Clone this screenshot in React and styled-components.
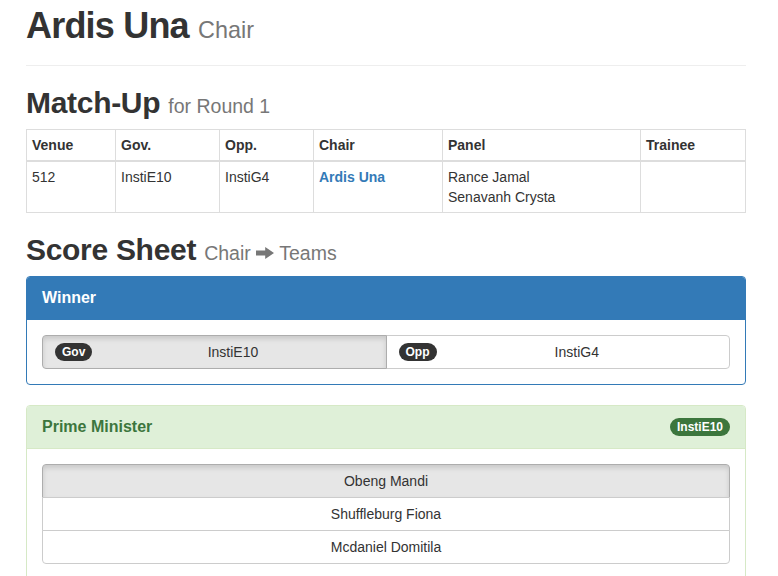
import { styled, createGlobalStyle } from 'styled-components';

const GlobalStyle = createGlobalStyle`
  body {
    margin: 0;
    font-family: "Liberation Sans", Arial, sans-serif;
    font-size: 14px;
    line-height: 20px;
    color: #333;
    background: #fff;
  }
`;

const matchup = {
  venue: '512',
  gov: 'InstiE10',
  opp: 'InstiG4',
  chair: 'Ardis Una',
  panel: ['Rance Jamal', 'Senavanh Crysta'],
  trainee: '',
};

const speakers = ['Obeng Mandi', 'Shuffleburg Fiona', 'Mcdaniel Domitila'];

function ArrowRight() {
  return (
    <ARROW_ST viewBox="0 0 18 12" aria-hidden="true">
      <path d="M0 3.6h9.2V0L18 6l-8.8 6V8.4H0z" fill="currentColor" />
    </ARROW_ST>
  );
}

function App() {
  return (
    <PAGE_ST>
      <GlobalStyle />
      <PAGEHEADER_ST>
        <H1_ST>
          Ardis Una <SMALL_ST>Chair</SMALL_ST>
        </H1_ST>
      </PAGEHEADER_ST>

      <H2_ST>
        Match-Up <SMALL_ST>for Round 1</SMALL_ST>
      </H2_ST>
      <TABLE_ST>
        <colgroup>
          <col style={{ width: 89 }} />
          <col style={{ width: 104 }} />
          <col style={{ width: 94 }} />
          <col style={{ width: 129 }} />
          <col style={{ width: 198 }} />
          <col />
        </colgroup>
        <thead>
          <tr>
            <TH_ST>Venue</TH_ST>
            <TH_ST>Gov.</TH_ST>
            <TH_ST>Opp.</TH_ST>
            <TH_ST>Chair</TH_ST>
            <TH_ST>Panel</TH_ST>
            <TH_ST>Trainee</TH_ST>
          </tr>
        </thead>
        <tbody>
          <tr>
            <TD_ST>{matchup.venue}</TD_ST>
            <TD_ST>{matchup.gov}</TD_ST>
            <TD_ST>{matchup.opp}</TD_ST>
            <TD_ST>
              <LINK_ST href="#">{matchup.chair}</LINK_ST>
            </TD_ST>
            <TD_ST>
              {matchup.panel.map((name) => (
                <div key={name}>{name}</div>
              ))}
            </TD_ST>
            <TD_ST>{matchup.trainee}</TD_ST>
          </tr>
        </tbody>
      </TABLE_ST>

      <H2_ST>
        Score Sheet{' '}
        <SMALL_ST>
          Chair <ArrowRight /> Teams
        </SMALL_ST>
      </H2_ST>

      <PANEL_ST $variant="primary">
        <HEADING_ST $variant="primary">
          <TITLE_ST>Winner</TITLE_ST>
        </HEADING_ST>
        <BODY_ST>
          <BTNGROUP_ST>
            <SIDEBTN_ST $active>
              <BADGE_ST>Gov</BADGE_ST>
              <BTNLABEL_ST>{matchup.gov}</BTNLABEL_ST>
            </SIDEBTN_ST>
            <SIDEBTN_ST>
              <BADGE_ST>Opp</BADGE_ST>
              <BTNLABEL_ST>{matchup.opp}</BTNLABEL_ST>
            </SIDEBTN_ST>
          </BTNGROUP_ST>
        </BODY_ST>
      </PANEL_ST>

      <PANEL_ST $variant="success">
        <HEADING_ST $variant="success">
          <TITLE_ST>Prime Minister</TITLE_ST>
          <BADGE_ST $color="#3c763d">{matchup.gov}</BADGE_ST>
        </HEADING_ST>
        <BODY_ST>
          <STACK_ST>
            {speakers.map((name, i) => (
              <STACKBTN_ST key={name} $active={i === 0}>
                {name}
              </STACKBTN_ST>
            ))}
          </STACK_ST>
        </BODY_ST>
      </PANEL_ST>
    </PAGE_ST>
  );
}

const PAGE_ST = styled.div`
  width: 720px;
  margin-left: 26px;
  padding-top: 1px;
`;

const PAGEHEADER_ST = styled.div`
  padding-bottom: 9px;
  border-bottom: 1px solid #eee;
  margin: 0 0 20px;
`;

const H1_ST = styled.h1`
  margin: 5px 0 10px;
  font-size: 36px;
  line-height: 1.1;
  font-weight: bold;
  letter-spacing: -0.8px;
  color: #333;
`;

const H2_ST = styled.h2`
  margin: 20px 0 10px;
  font-size: 30px;
  line-height: 1.1;
  font-weight: bold;
  letter-spacing: -0.3px;
  color: #333;
`;

const SMALL_ST = styled.small`
  font-size: 65%;
  font-weight: normal;
  letter-spacing: 0;
  color: #777;
`;

const ARROW_ST = styled.svg`
  width: 18px;
  height: 12px;
  vertical-align: 1px;
`;

const TABLE_ST = styled.table`
  width: 100%;
  table-layout: fixed;
  border-collapse: collapse;
  border: 1px solid #ddd;
  margin-bottom: 20px;
`;

const TH_ST = styled.th`
  padding: 5px;
  text-align: left;
  font-weight: bold;
  border: 1px solid #ddd;
  border-bottom-width: 2px;
  vertical-align: bottom;
`;

const TD_ST = styled.td`
  padding: 5px;
  border: 1px solid #ddd;
  vertical-align: top;
`;

const LINK_ST = styled.a`
  color: #337ab7;
  font-weight: bold;
  text-decoration: none;
`;

const PANEL_ST = styled.div`
  background: #fff;
  border: 1px solid ${(p) => (p.$variant === 'success' ? '#d6e9c6' : '#337ab7')};
  border-radius: 4px;
  margin-bottom: 20px;
  overflow: hidden;
`;

const HEADING_ST = styled.div`
  display: flex;
  align-items: center;
  justify-content: space-between;
  height: 42px;
  padding: 0 15px;
  background: ${(p) => (p.$variant === 'success' ? '#dff0d8' : '#337ab7')};
  color: ${(p) => (p.$variant === 'success' ? '#3c763d' : '#fff')};
  border-bottom: 1px solid ${(p) => (p.$variant === 'success' ? '#d6e9c6' : '#337ab7')};
`;

const TITLE_ST = styled.h3`
  margin: 0;
  font-size: 16px;
  font-weight: bold;
  line-height: 1.1;
`;

const BODY_ST = styled.div`
  padding: 15px;
`;

const BADGE_ST = styled.span`
  display: inline-block;
  padding: 3px 7px;
  font-size: 12px;
  font-weight: bold;
  line-height: 12px;
  color: #fff;
  background: ${(p) => p.$color || '#333'};
  border-radius: 10px;
  white-space: nowrap;
`;

const BTNGROUP_ST = styled.div`
  display: flex;
`;

const SIDEBTN_ST = styled.div`
  flex: 1;
  display: flex;
  align-items: center;
  padding: 6px 12px;
  line-height: 20px;
  border: 1px solid ${(p) => (p.$active ? '#adadad' : '#ccc')};
  background: ${(p) => (p.$active ? '#e6e6e6' : '#fff')};
  box-shadow: ${(p) => (p.$active ? 'inset 0 3px 5px rgba(0, 0, 0, 0.125)' : 'none')};
  position: relative;
  z-index: ${(p) => (p.$active ? 2 : 1)};

  &:first-child {
    border-radius: 4px 0 0 4px;
  }
  &:last-child {
    border-radius: 0 4px 4px 0;
    margin-left: -1px;
  }
`;

const BTNLABEL_ST = styled.span`
  flex: 1;
  text-align: center;
`;

const STACK_ST = styled.div`
  display: flex;
  flex-direction: column;
`;

const STACKBTN_ST = styled.div`
  padding: 6px 12px;
  line-height: 20px;
  text-align: center;
  border: 1px solid ${(p) => (p.$active ? '#adadad' : '#ccc')};
  background: ${(p) => (p.$active ? '#e6e6e6' : '#fff')};
  box-shadow: ${(p) => (p.$active ? 'inset 0 3px 5px rgba(0, 0, 0, 0.125)' : 'none')};

  & + & {
    margin-top: -1px;
  }
  &:first-child {
    border-radius: 4px 4px 0 0;
  }
  &:last-child {
    border-radius: 0 0 4px 4px;
  }
`;

export default App;
